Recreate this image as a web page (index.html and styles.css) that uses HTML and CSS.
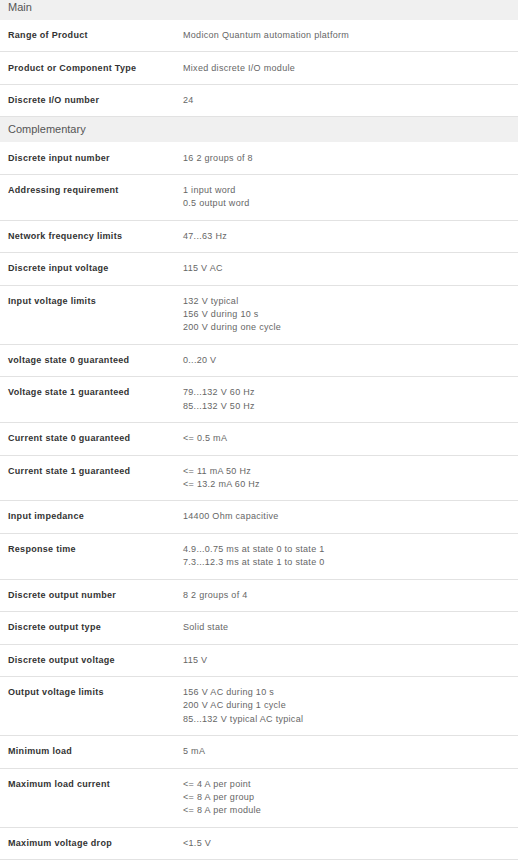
FILE: index.html
```html
<!DOCTYPE html>
<html>
<head>
<meta charset="utf-8">
<link rel="stylesheet" href="styles.css">
</head>
<body>
<div class="specs">
  <div class="section-title first">Main</div>
  <div class="row"><div class="label">Range of Product</div><div class="value">Modicon Quantum automation platform</div></div>
  <div class="row"><div class="label">Product or Component Type</div><div class="value">Mixed discrete I/O module</div></div>
  <div class="row"><div class="label">Discrete I/O number</div><div class="value">24</div></div>
  <div class="section-title">Complementary</div>
  <div class="row"><div class="label">Discrete input number</div><div class="value">16 2 groups of 8</div></div>
  <div class="row"><div class="label">Addressing requirement</div><div class="value">1 input word<br>0.5 output word</div></div>
  <div class="row"><div class="label">Network frequency limits</div><div class="value">47...63 Hz</div></div>
  <div class="row"><div class="label">Discrete input voltage</div><div class="value">115 V AC</div></div>
  <div class="row"><div class="label">Input voltage limits</div><div class="value">132 V typical<br>156 V during 10 s<br>200 V during one cycle</div></div>
  <div class="row"><div class="label">voltage state 0 guaranteed</div><div class="value">0...20 V</div></div>
  <div class="row"><div class="label">Voltage state 1 guaranteed</div><div class="value">79...132 V 60 Hz<br>85...132 V 50 Hz</div></div>
  <div class="row"><div class="label">Current state 0 guaranteed</div><div class="value">&lt;= 0.5 mA</div></div>
  <div class="row"><div class="label">Current state 1 guaranteed</div><div class="value">&lt;= 11 mA 50 Hz<br>&lt;= 13.2 mA 60 Hz</div></div>
  <div class="row"><div class="label">Input impedance</div><div class="value">14400 Ohm capacitive</div></div>
  <div class="row"><div class="label">Response time</div><div class="value">4.9...0.75 ms at state 0 to state 1<br>7.3...12.3 ms at state 1 to state 0</div></div>
  <div class="row"><div class="label">Discrete output number</div><div class="value">8 2 groups of 4</div></div>
  <div class="row"><div class="label">Discrete output type</div><div class="value">Solid state</div></div>
  <div class="row"><div class="label">Discrete output voltage</div><div class="value">115 V</div></div>
  <div class="row"><div class="label">Output voltage limits</div><div class="value">156 V AC during 10 s<br>200 V AC during 1 cycle<br>85...132 V typical AC typical</div></div>
  <div class="row"><div class="label">Minimum load</div><div class="value">5 mA</div></div>
  <div class="row"><div class="label">Maximum load current</div><div class="value">&lt;= 4 A per point<br>&lt;= 8 A per group<br>&lt;= 8 A per module</div></div>
  <div class="row"><div class="label">Maximum voltage drop</div><div class="value">&lt;1.5 V</div></div>
</div>
</body>
</html>
```
FILE: styles.css
```css
html, body {
  margin: 0;
  padding: 0;
  background: #fff;
}
body {
  font-family: "Liberation Sans", Arial, sans-serif;
  overflow: hidden;
}
.specs {
  width: 518px;
  margin-top: -5px;
}
.section-title {
  background: #f0f0f0;
  color: #555;
  font-size: 11px;
  line-height: 25px;
  height: 25px;
  padding-left: 8px;
}
.row {
  display: flex;
  border-bottom: 1px solid #e2e2e2;
  padding: 9.1px 0;
  font-size: 9px;
  line-height: 13.3px;
}
.label {
  width: 175px;
  padding-left: 8px;
  font-weight: bold;
  color: #333;
  letter-spacing: 0.3px;
}
.value {
  flex: 1;
  color: #666;
  letter-spacing: 0.3px;
}
```
